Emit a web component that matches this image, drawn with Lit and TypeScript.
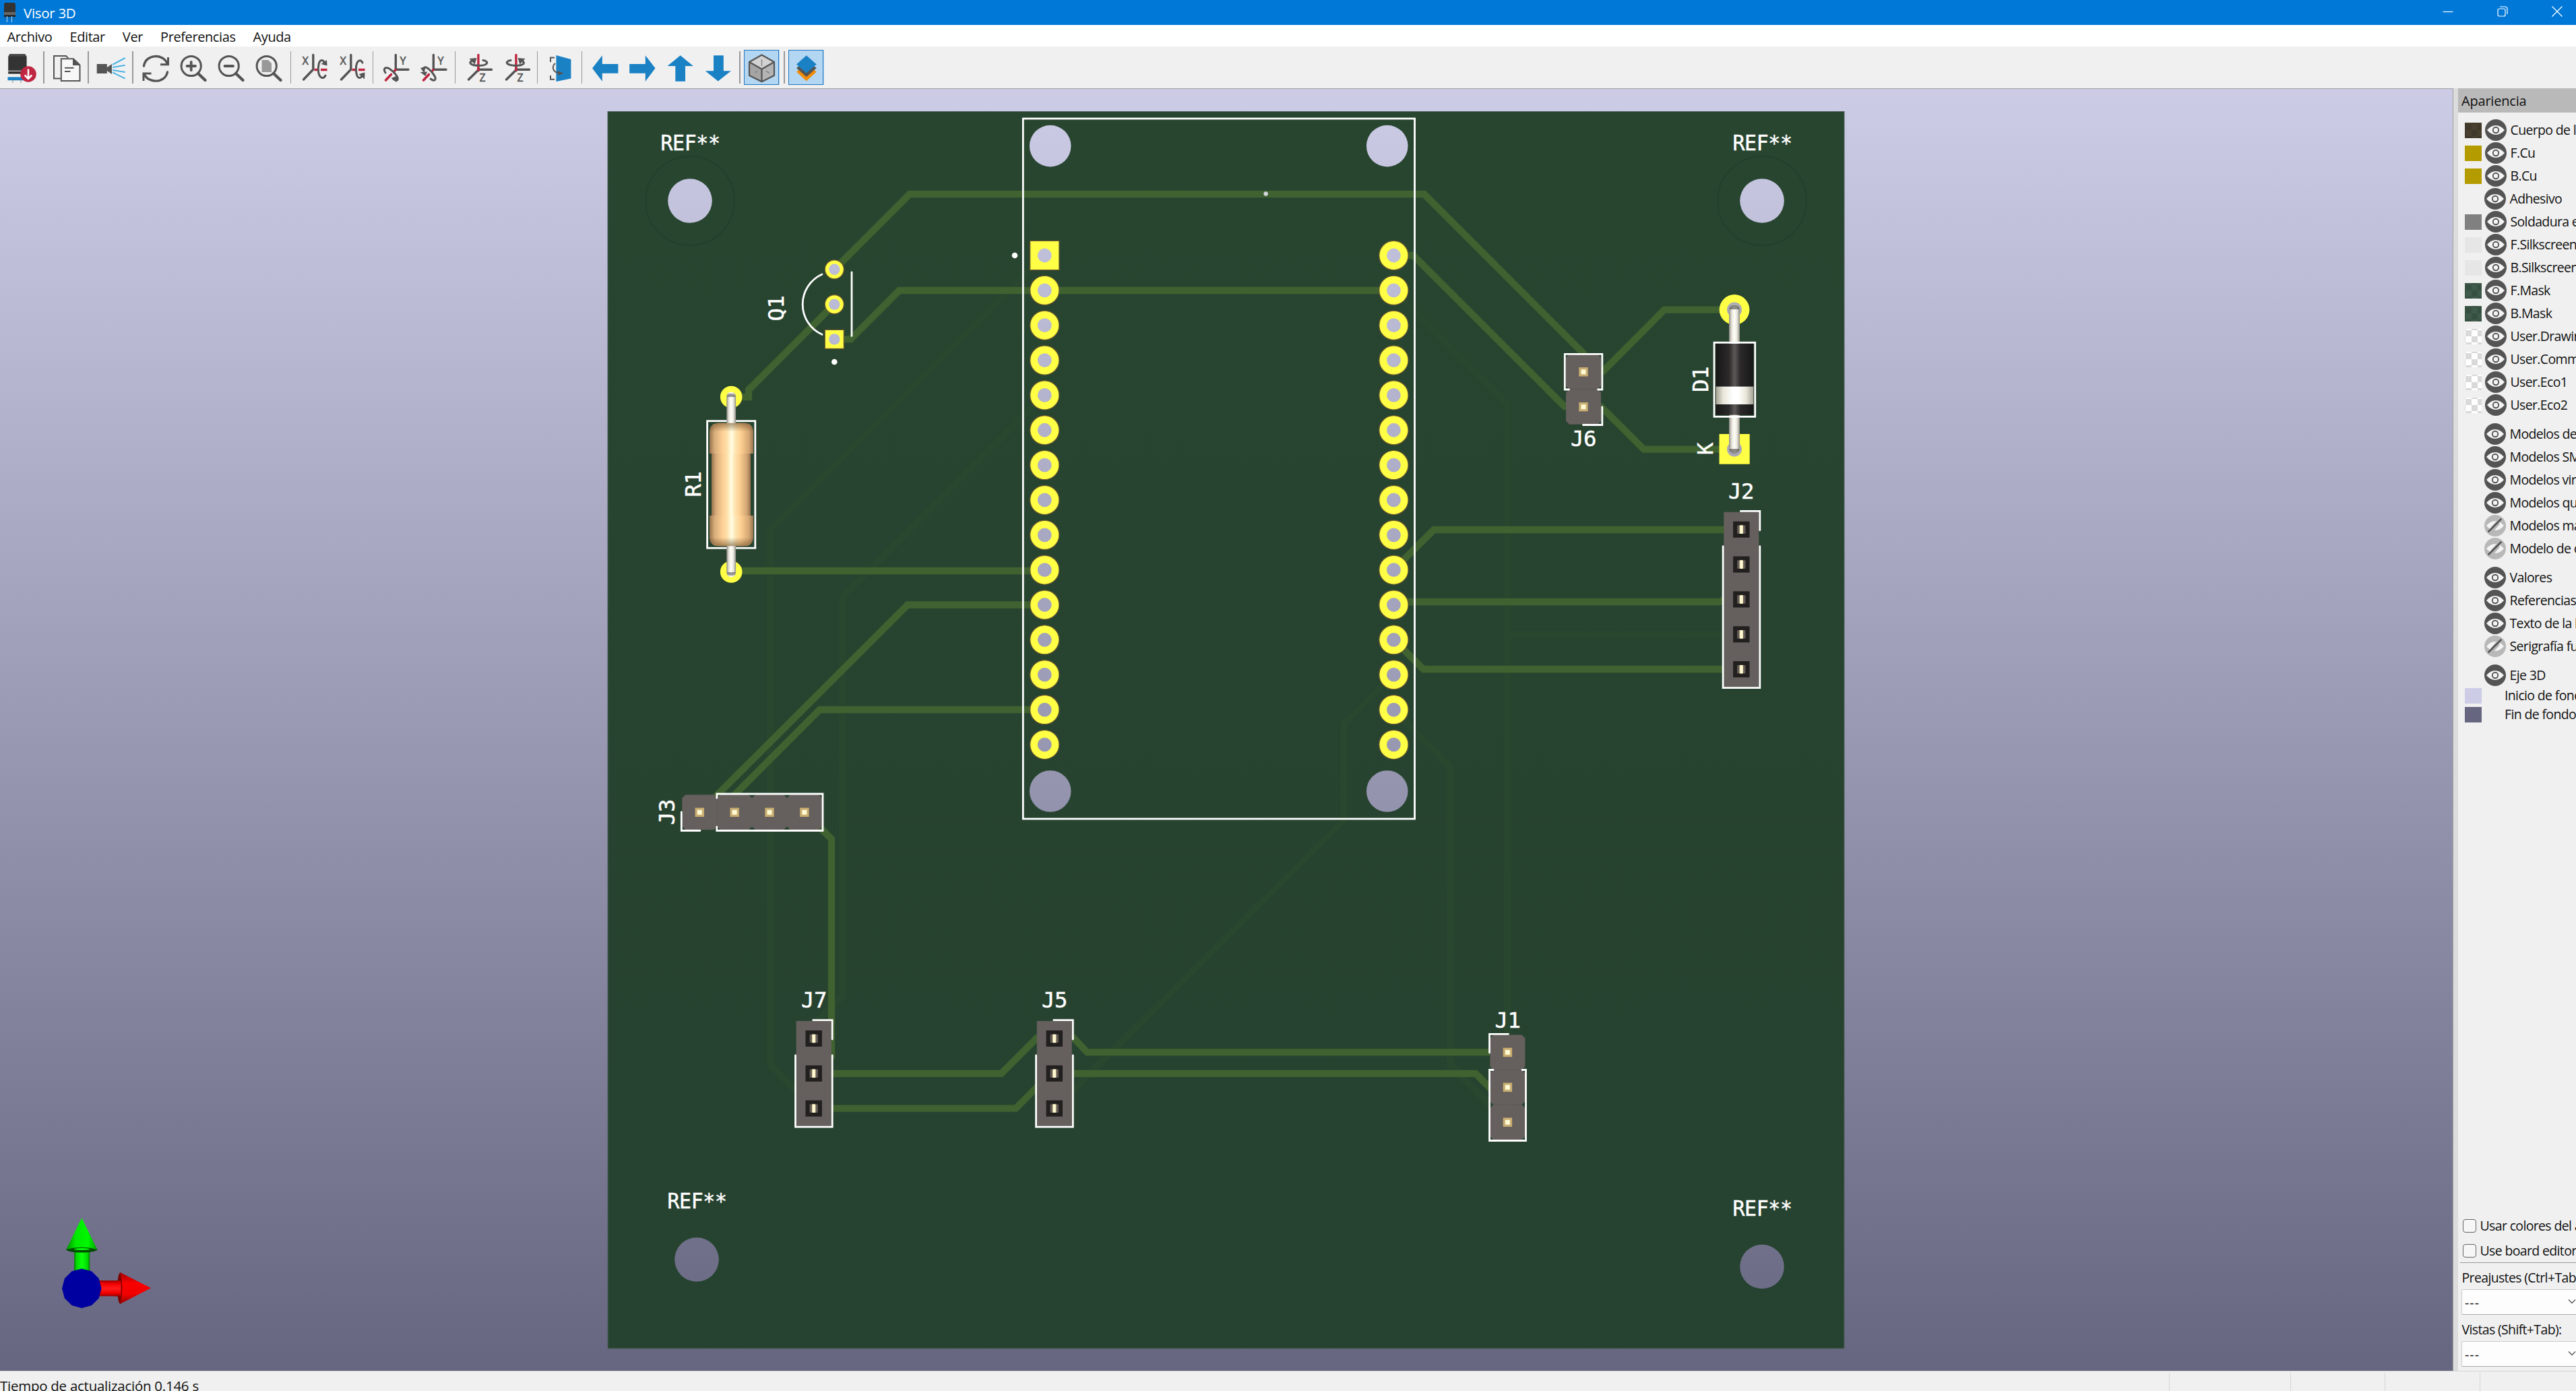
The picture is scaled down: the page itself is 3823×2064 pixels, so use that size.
import { LitElement, html, svg, css } from "lit";
import { customElement } from "lit/decorators.js";

const PITCH = 51.85;
const range = (n: number) => Array.from({ length: n }, (_, i) => i);

/* ---------- toolbar icons, drawn on a 56 x 62 grid ---------- */
const G = "#545454";
const RED = "#bf2641";
const BLUE = "#1a81c4";

const lens = svg`<circle cx="25.7" cy="29" r="14.6" fill="none" stroke=${G} stroke-width="3"/>
  <path d="M36 40L46.5 50" stroke=${G} stroke-width="4.4" stroke-linecap="round"/>`;

const arrow = (pts: string) => svg`<polygon points=${pts} fill=${BLUE}/>`;

const axisX = (top: boolean) => svg`
  <text x="12.5" y="26.6" class="ax">X</text>
  <path d="M28.8 12.5V34L14.5 49" fill="none" stroke=${G} stroke-width="3.4" stroke-linecap="round"/>
  <path d="M30.5 34.5H35.5M40 34.5H49.5" stroke=${RED} stroke-width="3.4"/>
  ${top
    ? svg`<path d="M47 43C44 49 38 47 36.6 38C35.6 29 37.5 20.5 41.5 20.5C44 20.5 45.5 23 46 26" fill="none" stroke=${G} stroke-width="3" stroke-linecap="round"/>
       <path d="M40.5 26L49.5 28.5L49 20Z" fill=${G}/>`
    : svg`<path d="M46 24C43 18.5 38 20 36.6 29C35.6 38 37.5 46.5 41.5 46.5C44 46.5 45.5 44 46 41" fill="none" stroke=${G} stroke-width="3" stroke-linecap="round"/>
       <path d="M40.5 41L49.5 38.5L49 48.5Z" fill=${G}/>`}`;

const axisY = (low: boolean) => svg`
  <text x="35.6" y="26.6" class="ax">Y</text>
  <path d="M29.3 12.5V34.3H48" fill="none" stroke=${G} stroke-width="3.4" stroke-linecap="round"/>
  <path d="M29 34.5L27 37M22.5 41.5L14.5 50" stroke=${RED} stroke-width="3.6" stroke-linecap="round"/>
  ${low
    ? svg`<path d="M14 39C10 33 14 29.5 20 33C27 37.5 34 46 32 49.5C31 51 28.5 50 26 48.5" fill="none" stroke=${G} stroke-width="3" stroke-linecap="round"/>
       <path d="M22.5 47L31.5 43.5L30.5 53Z" fill=${G}/>`
    : svg`<path d="M15 34C14.5 29.5 18 29.5 23 34C29 39.5 34 47 31.5 49.5C30 51 27 49.5 25 48" fill="none" stroke=${G} stroke-width="3" stroke-linecap="round"/>
       <path d="M9.5 38L20 37.5L17.5 44Z" fill=${G}/><path d="M10 32L17 30L16 40Z" fill=${G}/>`}`;

const axisZ = (left: boolean) => svg`
  <text x="30.5" y="51.5" class="ax">Z</text>
  <path d="M28.9 36V12.5" stroke=${RED} stroke-width="3.4" stroke-linecap="round"/>
  <path d="M48.5 34.3H29.5L14.5 49" fill="none" stroke=${G} stroke-width="3.4" stroke-linecap="round"/>
  <path d="M28.9 36V31" stroke=${RED} stroke-width="3.4"/>
  ${left
    ? svg`<path d="M36 20.5C45 22 44 28 30 28.3C18 28.3 13 24 20 21" fill="none" stroke=${G} stroke-width="3" stroke-linecap="round"/>
       <path d="M15.5 18L26.5 17L23.5 26.5Z" fill=${G}/>`
    : svg`<path d="M21 20.5C12 22 13 28 28 28.3C40 28.3 44 24 37 21" fill="none" stroke=${G} stroke-width="3" stroke-linecap="round"/>
       <path d="M42.5 18L31.5 17L34.5 26.5Z" fill=${G}/>`}`;

const icons: Record<string, unknown> = {
  export: svg`
    <path d="M15 48V54M27 48V54" stroke="#aaa" stroke-width="1.5"/>
    <path d="M10.5 11H33L35.6 15V36H8.2V15Z" fill="#333"/><path d="M10.5 11H33L35 14.5H8.8Z" fill="#4a4a4a"/>
    <path d="M8.2 35H35.6V38H8.2Z" fill="#777"/><path d="M8.2 38H35.6V40.5H8.2Z" fill="#222"/>
    <path d="M7.5 45.3H34V50.2H7.5Z" fill=${BLUE}/>
    <circle cx="38" cy="41" r="11.8" fill=${RED}/>
    <path d="M38 33.5V47M32.7 42.5L38 48L43.3 42.5" fill="none" stroke="#fff" stroke-width="2.6"/>`,
  copy: svg`
    <path d="M20 47.5H10V14H28L31 17" fill="none" stroke=${G} stroke-width="2"/>
    <path d="M20.8 18.3H39L48.5 27.5V51H20.8Z" fill="#fff" fill-opacity=".5" stroke=${G} stroke-width="2"/>
    <path d="M38 18L49 28H38Z" fill=${G}/>
    <path d="M26 31.8H39.5M26 37H34.5" stroke=${G} stroke-width="2"/>`,
  camera: svg`
    <path d="M7.7 26H22.8V31L30 26V41L22.8 36V40H7.7Z" fill=${G}/>
    <path d="M31 27L49.7 17M31 31L49.7 27.7M31 35L49.7 38M31 38.3L49.7 47.7" stroke="#4db3e4" stroke-width="2"/>`,
  refresh: svg`
    <path d="M11.5 29C14 11 40 10 46 25" fill="none" stroke=${G} stroke-width="3.4" stroke-linecap="round"/>
    <path d="M47.5 16V26.8H36" fill="none" stroke=${G} stroke-width="3"/>
    <path d="M46.5 38C43 55 18 55 12 41" fill="none" stroke=${G} stroke-width="3.4" stroke-linecap="round"/>
    <path d="M11 51V40H22.5" fill="none" stroke=${G} stroke-width="3"/>`,
  zoomIn: svg`${lens}<path d="M19.5 29H32M25.7 22.8V35.2" stroke=${G} stroke-width="3.8" stroke-linecap="round"/>`,
  zoomOut: svg`${lens}<path d="M19.5 29H32" stroke=${G} stroke-width="3.8" stroke-linecap="round"/>`,
  zoomFit: svg`${lens}<path d="M18.5 20H28L33 25V38H18.5Z" fill="#999"/>`,
  rx1: axisX(true), rx2: axisX(false),
  ry1: axisY(true), ry2: axisY(false),
  rz1: axisZ(true), rz2: axisZ(false),
  flip: svg`
    <path d="M20 16.5H14V23M14 43V48.7H20" fill="none" stroke=${G} stroke-width="2"/>
    <path d="M22.4 13L44.4 19V47.5L22.4 52Z" fill=${BLUE}/>
    <path d="M21 25C16 29 16 38 27 39.5" fill="none" stroke=${G} stroke-width="2"/>
    <path d="M24.5 36L33 39.5L26 43Z" fill=${G}/>`,
  left: arrow("10,32.3 24.8,13.3 24.8,26 48.4,26 48.4,39.7 24.8,39.7 24.8,51.7"),
  right: arrow("47.5,32.3 32.8,13.3 32.8,26 9.2,26 9.2,39.7 32.8,39.7 32.8,51.7"),
  up: arrow("28.7,13.3 47.9,29 36,29 36,51.7 21.3,51.7 21.3,29 9.5,29"),
  down: arrow("28.7,51.5 47.9,36.2 36.8,36.2 36.8,13.3 22,13.3 22,36.2 9.8,36.2"),
  cube: svg`
    <path d="M28.5 12.5L47 23V43L28.5 52.2L10 43V23Z" fill="#b4b4b4"/>
    <path d="M28.5 12.5L47 23L28.5 33.5L10 23Z" fill="#d2d2d2"/>
    <path d="M10 23L28.5 33.5V52.2L10 43Z" fill="#a5a5a5"/>
    <path d="M28.5 19V29M18 39L22 36.5M35 36.5L40 39.5" stroke="#888" stroke-width="1.5"/>
    <path d="M28.5 12.5L47 23V43L28.5 52.2L10 43V23ZM10 23L28.5 33.5L47 23M28.5 33.5V52.2" fill="none" stroke=${G} stroke-width="2.2" stroke-linejoin="round"/>`,
  layers: svg`
    <path d="M14 37.5L28.8 26L43.8 37.5L28.8 51.3Z" fill="#f28d0a"/>
    <path d="M14 32L28.8 20L43.8 32L28.8 45Z" fill="#545454"/>
    <path d="M14 26.5L28.8 13.3L43.8 26.5L28.8 39.5Z" fill=${BLUE}/>`,
};

const toolbar: string[][] = [
  ["export"], ["copy"], ["camera"], ["refresh", "zoomIn", "zoomOut", "zoomFit"],
  ["rx1", "rx2"], ["ry1", "ry2"], ["rz1", "rz2"], ["flip"],
  ["left", "right", "up", "down"], ["cube"], ["layers"],
];

@customElement("tool-bar")
export class ToolBar extends LitElement {
  static styles = css`
    :host { display: flex; align-items: center; height: 62px; padding-left: 4px; background: #f0f0f0; }
    .sep { width: 10.1px; height: 48px; display: flex; justify-content: center; }
    .sep::before { content: ""; width: 1.5px; background: #999; }
    .tool { width: 56px; height: 62px; flex: none; display: flex; align-items: center; justify-content: center; }
    .tool.on { background: linear-gradient(#b3d6f3, #b3d6f3) center / 52px 52px no-repeat; }
    .tool.on::before { content: ""; width: 50px; height: 50px; border: 1px solid #2076c0; margin-right: -54px; }
    svg { width: 56px; height: 62px; display: block; flex: none; }
    .ax { font: 16px "Noto Sans", sans-serif; fill: #545454; stroke: #545454; stroke-width: .5px; }
  `;
  render() {
    return toolbar.map((g, i) => html`
      ${i ? html`<div class="sep"></div>` : ""}
      ${g.map(n => html`<div class="tool ${n === "cube" || n === "layers" ? "on" : ""}"><svg viewBox="0 0 56 62">${icons[n]}</svg></div>`)}`);
  }
}

/* ---------- board scene ---------- */
const label = (x: number, base: number, t: string, w: number) =>
  svg`<text class="silk" x=${x} y=${base} text-anchor="middle" textLength=${w} lengthAdjust="spacingAndGlyphs">${t}</text>`;
const vlabel = (base: number, y: number, t: string, w: number) =>
  svg`<text class="silk" transform="translate(${base} ${y}) rotate(-90)" text-anchor="middle" textLength=${w} lengthAdjust="spacingAndGlyphs">${t}</text>`;

const pad = (x: number, y: number, r: number, h: number, square = false) => svg`
  ${square
    ? svg`<rect x=${x - r} y=${y - r} width=${2 * r} height=${2 * r} class="pad"/>`
    : svg`<circle cx=${x} cy=${y} r=${r} class="pad"/>`}
  <circle cx=${x} cy=${y} r=${h} class="bg"/>`;

const hole = (x: number, y: number, r: number, ring = false) => svg`
  ${ring ? svg`<circle cx=${x} cy=${y} r="66" class="ring"/>` : ""}
  <circle cx=${x} cy=${y} r=${r} class="bg"/>`;

const cell = (cx: number, cy: number) => {
  const a = 26, b = 21;
  return svg`<polygon class="body" points="${cx - b},${cy - a} ${cx + b},${cy - a} ${cx + a},${cy - b} ${cx + a},${cy + b} ${cx + b},${cy + a} ${cx - b},${cy + a} ${cx - a},${cy + b} ${cx - a},${cy - b}"/>`;
};
const pin = (x: number, y: number) => svg`
  <rect x=${x - 6.7} y=${y - 6.7} width="13.4" height="13.4" fill="#c9ae72"/>
  <rect x=${x - 3.5} y=${y - 3.5} width="7" height="7" fill="#fdfad4"/>`;
const header = (pts: number[][]) => svg`${pts.map(p => cell(p[0], p[1]))}${pts.map(p => pin(p[0], p[1]))}`;

const socket = (x: number, y: number, n: number) => svg`
  <rect class="body" x=${x - 26} y=${y - 26} width="52" height=${n * PITCH + 1}/>
  ${range(n).map(i => {
    const c = y + i * PITCH;
    return svg`<rect x=${x - 12.2} y=${c - 12} width="24.4" height="24" fill="#221f1f"/>
      <rect x=${x - 6.2} y=${c - 6.2} width="12.4" height="12.4" fill="#625b57"/>
      <rect x=${x - 2.8} y=${c - 6.2} width="5.6" height="12.4" fill="#d6c48f"/>
      <rect x=${x - 2} y=${c - 6.2} width="4" height="12.4" fill="#fdfad4"/>`;
  })}
  <path class="sl" d="M${x - 1} ${y - 27.3}H${x + 27.5}V${y + 1}M${x - 27.2} ${y + 25}V${y + (n - 0.5) * PITCH + 1.5}H${x + 27.5}V${y + 25}"/>`;

@customElement("board-view")
export class BoardView extends LitElement {
  static styles = css`
    :host { display: block; width: 3641px; height: 1903px; border-top: 1px solid #a0a0a0; border-right: 1px solid #a0a0a0; box-sizing: border-box; }
    svg { display: block; width: 3640px; height: 1902px; }
    .silk { font: 32px "DejaVu Sans Mono", monospace; fill: #fff; stroke: #fff; stroke-width: .5px; }
    .tr path { fill: none; stroke: #406130; stroke-width: 10.3px; }
    .ft path { fill: none; stroke: #29462e; stroke-width: 10.3px; }
    .sl { fill: none; stroke: #fff; stroke-width: 2.8px; stroke-linecap: round; }
    .bg { fill: url(#sky); }
    .ring { fill: none; stroke: #243f2d; stroke-width: 2px; }
    .pad { fill: #ffff45; stroke: #6f5730; stroke-width: 1.2px; }
    .body { fill: #655f5d; }
  `;
  render() {
    return html`<svg viewBox="0 132 3640 1902">
      <defs>
        <linearGradient id="sky" gradientUnits="userSpaceOnUse" x1="0" y1="132" x2="0" y2="2034"><stop offset="0" stop-color="#cccce6"/><stop offset="1" stop-color="#666680"/></linearGradient>
        <linearGradient id="pcb" x1="0" y1="0" x2="0" y2="1"><stop offset="0" stop-color="#284530"/><stop offset="1" stop-color="#264230"/></linearGradient>
        <linearGradient id="res"><stop offset="0" stop-color="#96734e"/><stop offset=".12" stop-color="#d9ad7b"/><stop offset=".3" stop-color="#fdd195"/><stop offset=".4" stop-color="#fee0aa"/><stop offset=".5" stop-color="#fffde2"/><stop offset=".6" stop-color="#fee3b0"/><stop offset=".72" stop-color="#fdcf91"/><stop offset=".9" stop-color="#d3a674"/><stop offset="1" stop-color="#96734e"/></linearGradient>
        <linearGradient id="lead"><stop offset="0" stop-color="#8b8982"/><stop offset=".25" stop-color="#e6e4da"/><stop offset=".5" stop-color="#fffff8"/><stop offset=".75" stop-color="#e6e4da"/><stop offset="1" stop-color="#8b8982"/></linearGradient>
        <linearGradient id="dio"><stop offset="0" stop-color="#181718"/><stop offset=".35" stop-color="#2b292a"/><stop offset=".5" stop-color="#5e5959"/><stop offset=".65" stop-color="#2b292a"/><stop offset="1" stop-color="#181718"/></linearGradient>
        <linearGradient id="band"><stop offset="0" stop-color="#a3a193"/><stop offset=".2" stop-color="#e9e7da"/><stop offset=".45" stop-color="#fff"/><stop offset=".6" stop-color="#fff"/><stop offset=".8" stop-color="#e9e7da"/><stop offset="1" stop-color="#a3a193"/></linearGradient>
        <linearGradient id="cap" x1="0" y1="0" x2="0" y2="1"><stop offset="0" stop-color="#503010" stop-opacity=".5"/><stop offset=".07" stop-color="#503010" stop-opacity="0"/><stop offset=".93" stop-color="#503010" stop-opacity="0"/><stop offset="1" stop-color="#503010" stop-opacity=".5"/></linearGradient>
        <linearGradient id="gs"><stop offset="0" stop-color="#067a06"/><stop offset=".15" stop-color="#00d800"/><stop offset=".5" stop-color="#0cff0c"/><stop offset=".85" stop-color="#00d800"/><stop offset="1" stop-color="#067a06"/></linearGradient>
        <linearGradient id="gc"><stop offset="0" stop-color="#008a00"/><stop offset=".3" stop-color="#00e800"/><stop offset=".7" stop-color="#00f800"/><stop offset="1" stop-color="#009a00"/></linearGradient>
        <linearGradient id="rs" x1="0" y1="0" x2="0" y2="1"><stop offset="0" stop-color="#900"/><stop offset=".2" stop-color="#f00000"/><stop offset=".5" stop-color="#ff1c1c"/><stop offset=".8" stop-color="#f00000"/><stop offset="1" stop-color="#900"/></linearGradient>
        <linearGradient id="rc" x1="0" y1="0" x2="0" y2="1"><stop offset="0" stop-color="#a00000"/><stop offset=".35" stop-color="#fa0000"/><stop offset=".7" stop-color="#f00000"/><stop offset="1" stop-color="#900000"/></linearGradient>
      </defs>
      <rect x="0" y="131" width="3641" height="1904" class="bg"/>
      <rect x="902" y="165.5" width="1835" height="1835.5" fill="url(#pcb)" stroke="#51605f" stroke-width="1"/>

      <g class="ft">
        <path d="M1550 379L1143 786V1580L1207 1644"/>
        <path d="M1550 586L1250 886V1478L1208 1520"/>
        <path d="M2068 1001L1994 1075V1217L1565 1645"/>
        <path d="M2068 1053L2152 1137V1580L2237 1665"/>
        <path d="M2068 431L2237 600V1540M2237 942H2584"/>
      </g>
      <g class="tr">
        <path d="M1238 400L1350 288H2113.5L2350 524.5V552L2379 551L2470 459.7H2574"/>
        <path d="M1238 451.5L1111 578.5V589H1085"/>
        <path d="M1238 503.3H1262.5L1334.5 431H2068"/>
        <path d="M2068 379H2097.5L2322 603.3H2376L2439.5 666.7H2574"/>
        <path d="M1085 847H1550"/>
        <path d="M1550 897.5H1347L1038 1206"/>
        <path d="M1550 1053H1216.5L1090 1179.5V1205"/>
        <path d="M2068 845.7L2128 786H2584"/>
        <path d="M2068 893H2552L2584 877"/>
        <path d="M2068 949L2112.5 993H2584"/>
        <path d="M1194 1205L1234 1245V1568L1208 1594"/>
        <path d="M1208 1593H1486L1539 1540H1593L1613.5 1561.4H2237"/>
        <path d="M1208 1644.6H1507.5L1560 1592"/>
        <path d="M1565 1593H2190L2237 1640"/>
      </g>

      ${label(1024.5, 223, "REF**", 88)} ${label(2615.5, 223, "REF**", 88)}
      ${label(1034.5, 1793, "REF**", 88)} ${label(2615.5, 1803.5, "REF**", 88)}
      ${hole(1024, 298, 32.8, true)} ${hole(2615, 298, 32.8, true)}
      ${hole(1034, 1869, 32.8)} ${hole(2615, 1879.5, 32.8)}

      <circle cx="1878.6" cy="287.5" r="3.2" fill="#d5d5e0"/>
      ${hole(1558.7, 216.6, 30.8)} ${hole(2058.7, 216.6, 30.8)}
      ${hole(1558.7, 1174, 30.8)} ${hole(2058.7, 1174, 30.8)}
      ${range(15).map(i => svg`${pad(1550.3, 379 + i * PITCH, 21.6, 10.4, i === 0)}${pad(2068.4, 379 + i * PITCH, 21.6, 10.4)}`)}
      <rect x="1518.3" y="176" width="581.2" height="1039" class="sl"/>
      <circle cx="1506" cy="379" r="4.3" fill="#fff"/>

      ${pad(1238.3, 399.8, 14, 8.2)} ${pad(1238.3, 451.6, 14, 8.2)} ${pad(1238.3, 503.4, 14, 8.2, true)}
      <path class="sl" d="M1220 407A49 49 0 0 0 1220 496.3M1264 404V498.5"/>
      <circle cx="1238.3" cy="537" r="4.3" fill="#fff"/>
      ${vlabel(1163, 457.5, "Q1", 38)}

      <circle cx="1085.2" cy="589" r="16.3" fill="#ffff45"/><circle cx="1085.2" cy="848.5" r="16.3" fill="#ffff45"/>
      <rect x="1049.6" y="624.7" width="71.2" height="188.5" class="sl"/>
      <rect x="1078.3" y="581.5" width="13.8" height="275" rx="6.9" fill="url(#lead)"/>
      <path d="M1078.8 589A6.5 6.5 0 0 1 1091.5 589ZM1078.8 849A6.5 6.5 0 0 0 1091.5 849Z" fill="#555" opacity=".6"/>
      <rect x="1056" y="660" width="58" height="118" fill="url(#res)"/>
      <path d="M1053 673V640Q1054 628 1067 627.7H1104Q1117 628 1118 640V673ZM1053 765V798Q1054 810 1067 810.3H1104Q1117 810 1118 798V765Z" fill="url(#res)"/>
      <rect x="1053" y="627.7" width="65" height="182.5" rx="14" fill="url(#cap)"/>
      ${vlabel(1040, 718.5, "R1", 38)}

      <circle cx="2574" cy="459.5" r="22.4" fill="#ffff45"/><rect x="2551.5" y="644" width="45.2" height="44.7" fill="#ffff45"/>
      <circle cx="2574" cy="459.5" r="11" fill="#a9a8b8"/><circle cx="2574" cy="666.5" r="11" fill="#a9a8b8"/>
      <rect x="2566" y="451" width="16" height="222.5" rx="8" fill="url(#lead)"/>
      <path d="M2566.5 459A7.5 7.5 0 0 1 2581.5 459ZM2566.5 666A7.5 7.5 0 0 0 2581.5 666Z" fill="#444" opacity=".6"/>
      <rect x="2544" y="508.3" width="60.7" height="110" class="sl"/>
      <rect x="2546.5" y="510" width="55.8" height="105.7" fill="url(#dio)"/>
      <rect x="2546.5" y="573.6" width="55.8" height="26.4" fill="url(#band)"/>
      ${vlabel(2534.5, 563, "D1", 38)} ${vlabel(2541.5, 666, "K", 18)}

      ${header([[2350, 551.8], [2350, 603.7]])}
      <path class="sl" d="M2328.5 578H2322.3V525.3H2377.8V578H2371.5M2377.8 604V630.5H2349.5"/>
      ${label(2350, 661.5, "J6", 38)}

      ${socket(2584.3, 785.7, 5)} ${label(2584, 739.5, "J2", 38)}
      ${socket(1207.7, 1541, 3)} ${label(1208, 1495, "J7", 38)}
      ${socket(1564.8, 1541, 3)} ${label(1565, 1495, "J5", 38)}

      ${header(range(4).map(i => [1038.3 + i * PITCH, 1205.3]))}
      <path class="sl" d="M1011.3 1205V1232.5H1039M1063.8 1184V1178H1221V1232.5H1063.8V1227"/>
      ${vlabel(1001, 1205, "J3", 38)}

      ${header(range(3).map(i => [2237.4, 1561.5 + i * PITCH]))}
      <path class="sl" d="M2210.5 1562V1534.3H2238.5M2216 1587.5H2210.5V1692.5H2264.5V1587.5H2259"/>
      ${label(2237.5, 1524.5, "J1", 38)}

      <rect x="110" y="1853" width="23.3" height="50" fill="url(#gs)"/>
      <ellipse cx="121.3" cy="1854" rx="23" ry="4.5" fill="#004c00"/>
      <path d="M121.3 1807.3L144.3 1854Q121 1847.5 98.3 1854Z" fill="url(#gc)"/>
      <path d="M110 1855H133.3V1852.5Q121.5 1851 110 1852.5Z" fill="url(#gs)"/>
      <rect x="146" y="1900" width="36" height="23.3" fill="url(#rs)"/>
      <ellipse cx="178.5" cy="1911.5" rx="4.3" ry="23.3" fill="#7a0000"/>
      <path d="M224 1911.3L178.3 1888Q184.5 1911 178.3 1934.7Z" fill="url(#rc)"/>
      <rect x="170" y="1900" width="9.5" height="23.3" fill="url(#rs)"/>
      <polygon fill="#0000a0" points=${range(12).map(i => `${(121.3 + 29.3 * Math.cos(i * Math.PI / 6)).toFixed(1)},${(1911.7 + 29.3 * Math.sin(i * Math.PI / 6)).toFixed(1)}`).join(" ")}/>
    </svg>`;
  }
}

/* ---------- appearance panel ---------- */
type Row = { t: string; sw?: string; off?: boolean };
const groups: Row[][] = [
  [
    { t: "Cuerpo de la placa", sw: "brown" }, { t: "F.Cu", sw: "cu" }, { t: "B.Cu", sw: "cu" }, { t: "Adhesivo" },
    { t: "Soldadura en pasta", sw: "gray" }, { t: "F.Silkscreen", sw: "silk" }, { t: "B.Silkscreen", sw: "silk" },
    { t: "F.Mask", sw: "mask" }, { t: "B.Mask", sw: "mask" }, { t: "User.Drawings", sw: "chk" },
    { t: "User.Comments", sw: "chk" }, { t: "User.Eco1", sw: "chk" }, { t: "User.Eco2", sw: "chk" },
  ],
  [
    { t: "Modelos de agujero pasante" }, { t: "Modelos SMD" }, { t: "Modelos virtuales" }, { t: "Modelos que no están" },
    { t: "Modelos marcados", off: true }, { t: "Modelo de cajas", off: true },
  ],
  [{ t: "Valores" }, { t: "Referencias" }, { t: "Texto de la huella" }, { t: "Serigrafía fuera", off: true }],
  [{ t: "Eje 3D" }],
];

const eye = (off?: boolean) => html`<svg class="eye" viewBox="0 0 32 32">
  <circle cx="16" cy="16" r="16" fill=${off ? "#b8b8b8" : "#545454"}/>
  <path d="M3 16Q9 9 16 9T29 16Q23 23 16 23T3 16Z" fill="#f4f4f4"/>
  ${off
    ? svg`<path d="M19 13L13 20" stroke="#b8b8b8" stroke-width="7" stroke-linecap="round"/><path d="M6.5 24.5L24.5 6.5" stroke="#545454" stroke-width="2.6" stroke-linecap="round"/>`
    : svg`<circle cx="16" cy="16" r="4.2" fill="#f4f4f4" stroke="#545454" stroke-width="1.9"/>`}
</svg>`;

@customElement("appearance-panel")
export class AppearancePanel extends LitElement {
  static styles = css`
    :host { display: flex; flex-direction: column; flex: 1; min-width: 0; height: 1903px; background: #f0f0f0; white-space: nowrap; overflow: hidden;
      border-left: 7px solid #dcdcdc; box-sizing: border-box; font: 19.5px/30px "Open Sans", "Noto Sans", sans-serif; letter-spacing: -.65px; color: #101010; }
    .head { height: 36px; line-height: 37px; padding-left: 5px; background: #b9b9b9; flex: none; font-size: 20px; letter-spacing: -.2px; }
    .rows { padding: 9px 0 0 10px; }
    .row { height: 34px; display: flex; align-items: center; }
    .group { margin-bottom: 9px; }
    .group.last { margin-bottom: -1px; }
    .eye { width: 32px; height: 32px; margin-right: 5.5px; flex: none; }
    .swatch { width: 25px; height: 23px; margin-right: 5px; flex: none; }
    .none { margin-right: 4px; }
    .brown { background: conic-gradient(#40382a 25%, #483f2e 0 50%, #40382a 0 75%, #483f2e 0) -8px 2px / 18px 18px; }
    .cu { background: #b39b00; }
    .gray { background: #808080; }
    .silk { background: #e6e6e6; }
    .mask { background: conic-gradient(#374f41 25%, #3e5a4a 0 50%, #374f41 0 75%, #3e5a4a 0) -8px 2px / 18px 18px; }
    .chk { background: conic-gradient(#fff 25%, #d9d9d9 0 50%, #fff 0 75%, #d9d9d9 0) 1px 2px / 18px 18px; }
    .start { background: #cccce6; margin-right: 34px; }
    .end { background: #666680; margin-right: 34px; }
    .bgrow { height: 28.3px; display: flex; align-items: center; }
    .fill { flex: 1; }
    .check { height: 37px; display: flex; align-items: center; gap: 5.5px; padding-left: 7px; flex: none; }
    .box { width: 18px; height: 18px; border: 1px solid #666; border-radius: 4px; background: #f6f6f6; flex: none; }
    .line { height: 1px; background: #999; margin-left: 3px; margin-top: -1px; flex: none; }
    .cap { height: 39px; line-height: 43px; padding-left: 5.5px; flex: none; }
    .pick { height: 36px; width: 240px; border: 1px solid #ccc; border-bottom-color: #aaa; background: #fdfdfd; margin-left: 5px; flex: none; display: flex; align-items: center; padding-left: 4px; letter-spacing: 1.1px; border-radius: 2px; }
    .chev { width: 12px; height: 8px; margin-left: 129px; margin-top: -2px; }
    .foot { height: 6px; flex: none; }
    .dash { width: 24px; margin-top: 2px; }
  `;
  render() {
    const pick = html`<div class="pick"><span class="dash">---</span><svg class="chev" viewBox="0 0 12 8"><path d="M1 1.5L6 6.5L11 1.5" fill="none" stroke="#555" stroke-width="1.3"/></svg></div>`;
    return html`
      <div class="head">Apariencia</div>
      <div class="rows">
        ${groups.map((g, i) => html`<div class="group ${i === groups.length - 1 ? "last" : ""}">${g.map(r => html`
          <div class="row"><span class="swatch ${r.sw ?? "none"}"></span>${eye(r.off)}<span>${r.t}</span></div>`)}</div>`)}
        <div class="bgrow"><span class="swatch start"></span>Inicio de fondo</div>
        <div class="bgrow"><span class="swatch end"></span>Fin de fondo</div>
      </div>
      <div class="fill"></div>
      <div class="check"><span class="box"></span>Usar colores del apilado</div>
      <div class="check"><span class="box"></span>Use board editor copper</div>
      <div class="line"></div>
      <div class="cap">Preajustes (Ctrl+Tab):</div>${pick}
      <div class="cap">Vistas (Shift+Tab):</div>${pick}
      <div class="foot"></div>`;
  }
}

@customElement("app-root")
export class AppRoot extends LitElement {
  static styles = css`
    :host { display: flex; flex-direction: column; width: 3823px; height: 2064px; overflow: hidden; background: #f0f0f0;
      font: 20px/30px "Open Sans", "Noto Sans", sans-serif; color: #101010; letter-spacing: -.4px; }
    .title { height: 37px; background: #0078d7; color: #fff; display: flex; align-items: center; padding-left: 6px; flex: none; }
    .logo { width: 17px; height: 30px; margin-right: 12px; }
    .name { flex: 1; font-size: 20.5px; letter-spacing: -.3px; }
    .ctl { width: 16px; height: 16px; margin-left: 65px; margin-top: -4px; }
    .ctl:last-child { margin-right: 20px; }
    .menu { height: 32px; line-height: 35px; background: #fff; display: flex; padding-left: 10.5px; flex: none; }
    .menu span { margin-right: 26px; }
    .main { display: flex; flex: none; }
    .status { flex: 1; border-top: 1px solid #d5d5d5; display: flex; }
    .msg { width: 3219px; line-height: 43px; font-size: 20.5px; letter-spacing: -.26px; white-space: nowrap; }
    .cell { border-left: 1px solid #d5d5d5; margin-top: 2px; box-sizing: border-box; }
    .c1 { width: 180px; } .c2 { width: 140px; } .c3 { width: 141px; } .c4 { flex: 1; }
  `;
  render() {
    return html`
      <div class="title">
        <svg class="logo" viewBox="0 0 17 30"><path d="M1.5 0H15.5L17 2V19H0V2Z" fill="#333"/><path d="M0 14H17V18H0Z" fill="#666"/><path d="M0 19H17V21H0Z" fill="#222"/><path d="M0 22.5H17V24.5H0Z" fill="#1a69a8"/><path d="M4.5 20V29M11.5 20V29" stroke="#b9d9f2" stroke-width="1"/></svg>
        <span class="name">Visor 3D</span>
        <svg class="ctl" viewBox="0 0 16 16"><path d="M.5 8.5H15.5" stroke="#fff" stroke-width="1.2"/></svg>
        <svg class="ctl" viewBox="0 0 16 16"><rect x="1" y="4" width="11" height="11" rx="2" fill="none" stroke="#fff" stroke-width="1.2"/><path d="M4 1H12Q15 1 15 4V12" fill="none" stroke="#fff" stroke-width="1.2"/></svg>
        <svg class="ctl" viewBox="0 0 16 16"><path d="M.5 .5L15.5 15.5M15.5 .5L.5 15.5" stroke="#fff" stroke-width="1.3"/></svg>
      </div>
      <div class="menu"><span>Archivo</span><span>Editar</span><span>Ver</span><span>Preferencias</span><span>Ayuda</span></div>
      <tool-bar></tool-bar>
      <div class="main"><board-view></board-view><appearance-panel></appearance-panel></div>
      <div class="status"><div class="msg">Tiempo de actualización 0.146 s</div><div class="cell c1"></div><div class="cell c2"></div><div class="cell c3"></div><div class="cell c4"></div></div>`;
  }
}
